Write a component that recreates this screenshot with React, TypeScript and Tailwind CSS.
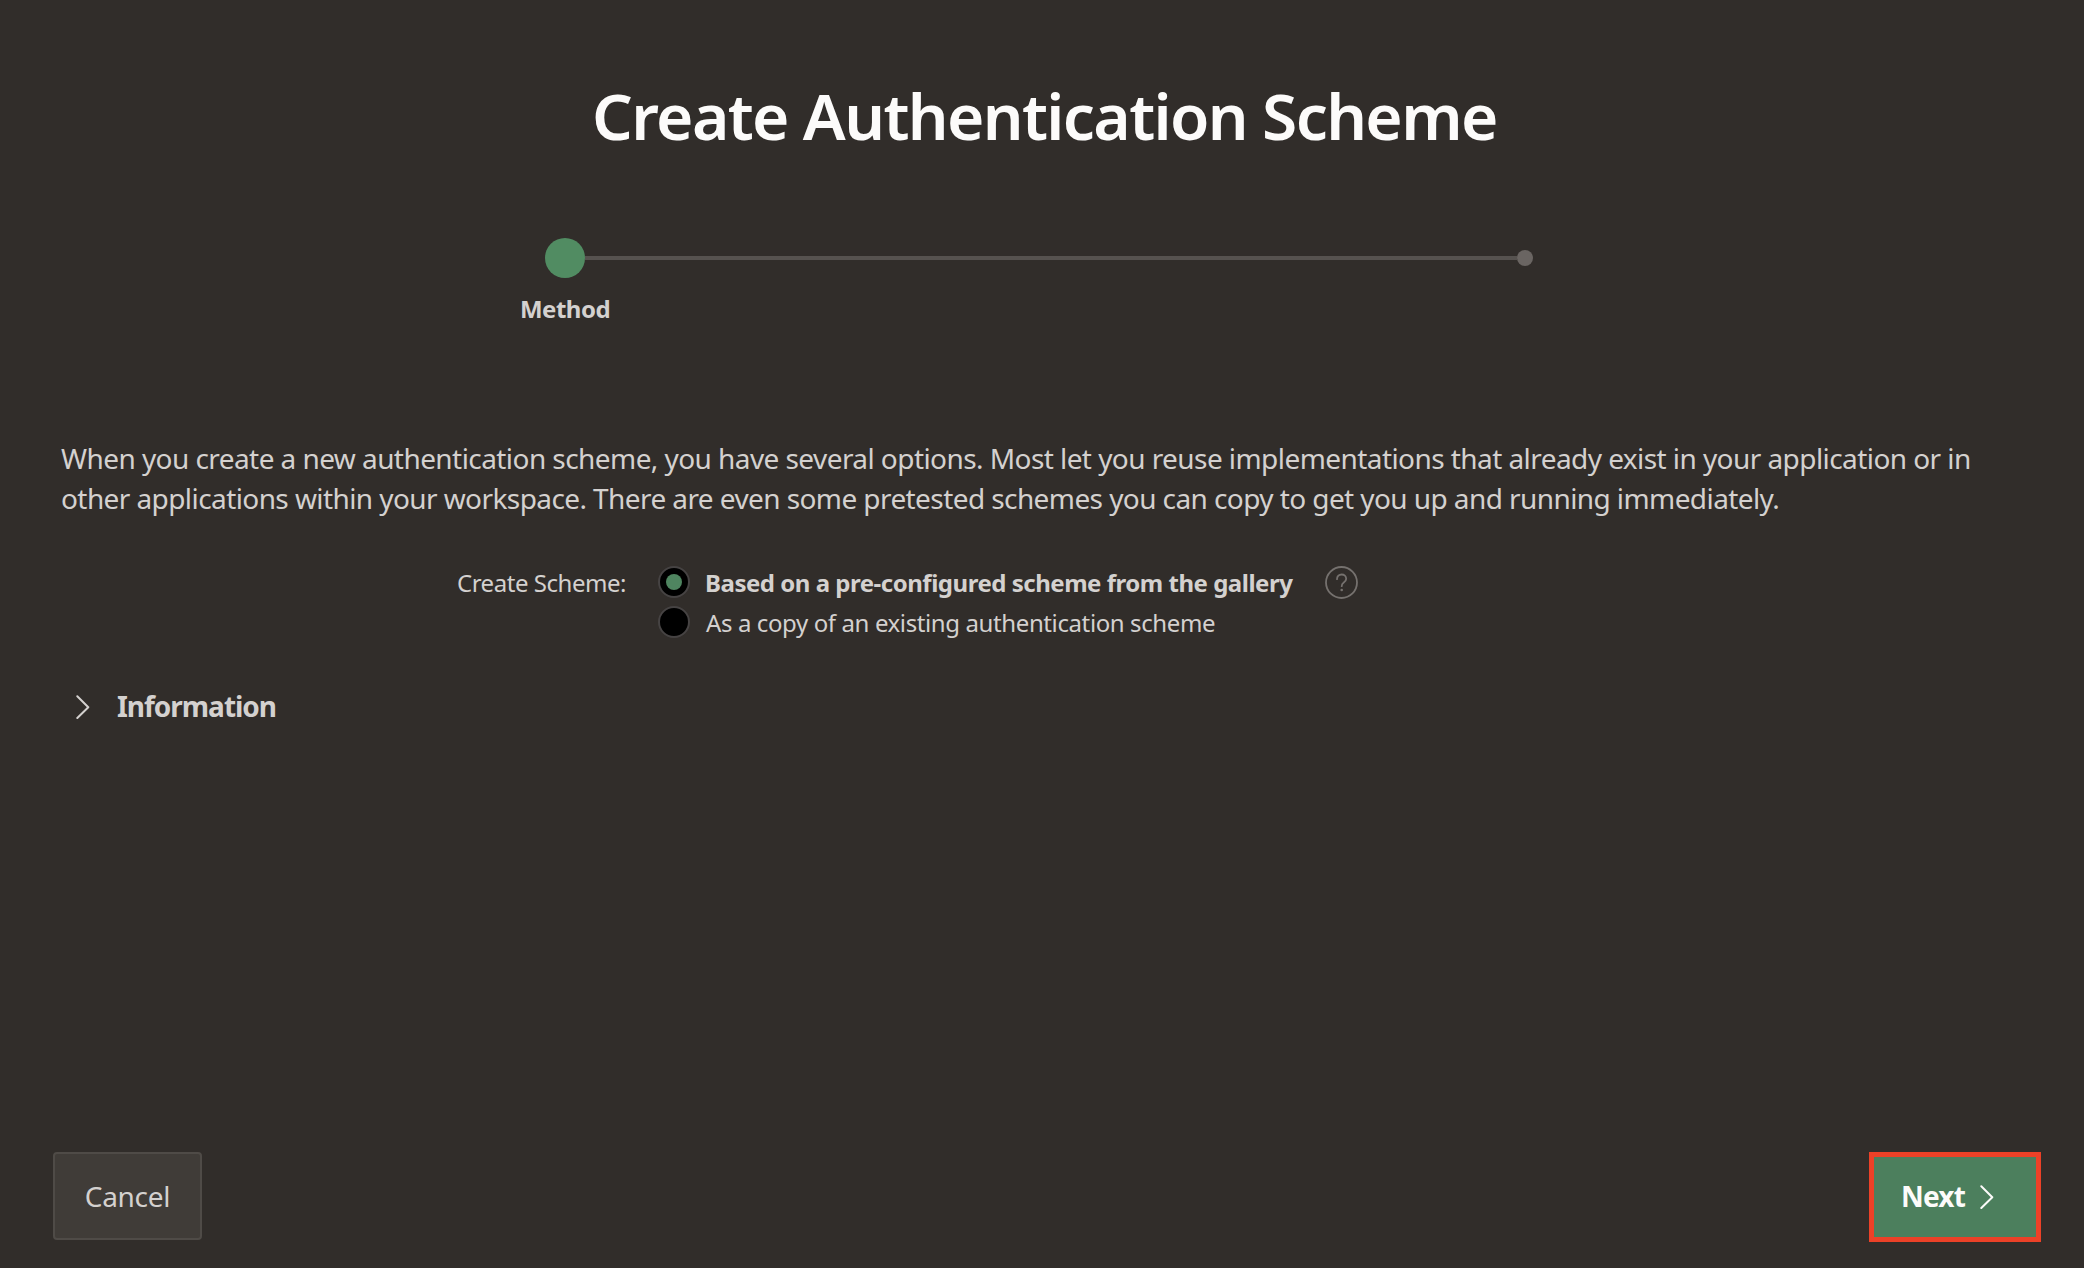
type ChevronProps = { className?: string };

function Chevron({ className = "" }: ChevronProps) {
  return (
    <svg
      viewBox="0 0 14 24"
      className={`h-6 w-3.5 shrink-0 ${className}`}
      fill="none"
      stroke="currentColor"
      strokeWidth="2"
      strokeLinecap="round"
      strokeLinejoin="round"
    >
      <path d="M1.3 1.3 12.3 12.2 1.3 23" />
    </svg>
  );
}

function HelpIcon() {
  return (
    <svg
      viewBox="0 0 33 33"
      className="mb-0.5 size-[33px] shrink-0 text-[#75716e]"
      fill="none"
      stroke="currentColor"
    >
      <circle cx="16.5" cy="16.5" r="15.5" strokeWidth="1.8" />
      <path
        d="M12 13.2c0-2.9 2-4.7 4.6-4.7s4.6 1.7 4.6 4.3c0 2-1.1 2.9-2.4 3.8-1.4 1-2.1 1.8-2.1 3.6"
        strokeWidth="1.8"
        strokeLinecap="round"
      />
      <circle cx="16.7" cy="24" r="1.3" fill="currentColor" stroke="none" />
    </svg>
  );
}

function Radio({ checked = false }: { checked?: boolean }) {
  return (
    <span className="mb-0.5 flex size-8 shrink-0 items-center justify-center rounded-full border-2 border-[#464343] bg-black">
      {checked && <span className="size-4 rounded-full bg-[#4f8560]" />}
    </span>
  );
}

function Stepper() {
  return (
    <div className="mt-[82px] ml-[545px] w-[988px]">
      <div className="flex items-center">
        <span className="size-10 rounded-full bg-[#518c62]" />
        <span className="h-1 flex-1 bg-[#56524f]" />
        <span className="size-4 rounded-full bg-[#6a6562]" />
      </div>
      <p className="mt-[15px] flex w-10 justify-center text-2xl/8 font-bold tracking-[-0.5px]">Method</p>
    </div>
  );
}

export default function App() {
  return (
    <main className="flex h-[1268px] w-[2084px] flex-col bg-[#312d2a] font-['Noto_Sans',sans-serif] text-[#d4d1cf]">
      <h1 className="mt-[76px] ml-[592px] text-[64px] leading-[80px] font-semibold tracking-[-1.63px] whitespace-nowrap text-[#fcfbfa]">
        Create Authentication Scheme
      </h1>

      <Stepper />

      <p className="mt-[113px] ml-[61px] text-[28px] leading-10 whitespace-nowrap tracking-[-0.567px]">
        When you create a new authentication scheme, you have several options. Most let you reuse implementations that
        already exist in your application or in
        <br />
        <span className="tracking-[-0.585px]">
          other applications within your workspace. There are even some pretested schemes you can copy to get you up
          and running immediately.
        </span>
      </p>

      <div className="mt-[45px] flex text-2xl/10 whitespace-nowrap">
        <span className="w-[626px] text-right tracking-[-0.46px]">Create Scheme:</span>
        <div className="ml-8 flex flex-col">
          <label className="flex h-10 items-center">
            <Radio checked />
            <span className="ml-[15px] w-[620px] font-bold tracking-[-0.48px]">
              Based on a pre-configured scheme from the gallery
            </span>
            <HelpIcon />
          </label>
          <label className="flex h-10 items-center">
            <Radio />
            <span className="ml-4 tracking-[-0.39px]">As a copy of an existing authentication scheme</span>
          </label>
        </div>
      </div>

      <div className="mt-[43px] flex h-10 items-center pl-[76px]">
        <Chevron className="mt-0.5" />
        <h2 className="ml-[27px] text-[28px] leading-10 font-bold tracking-[-1.02px]">Information</h2>
      </div>

      <footer className="mt-auto mb-[26px] flex items-start justify-between pr-[43px] pl-[53px]">
        <button className="h-[88px] w-[149px] rounded border-2 border-[#4f4b47] bg-[#403c38] text-[28px] leading-10 tracking-[-0.3px]">
          Cancel
        </button>
        <button className="flex h-[90px] w-[172px] items-center border-5 border-[#ec4127] bg-[#4c7f5d] pb-0.5 pl-[27px] text-[28px] leading-10 font-bold tracking-[-0.8px] text-[#fcfbfa]">
          Next
          <Chevron className="mt-0.5 ml-[15px]" />
        </button>
      </footer>
    </main>
  );
}
